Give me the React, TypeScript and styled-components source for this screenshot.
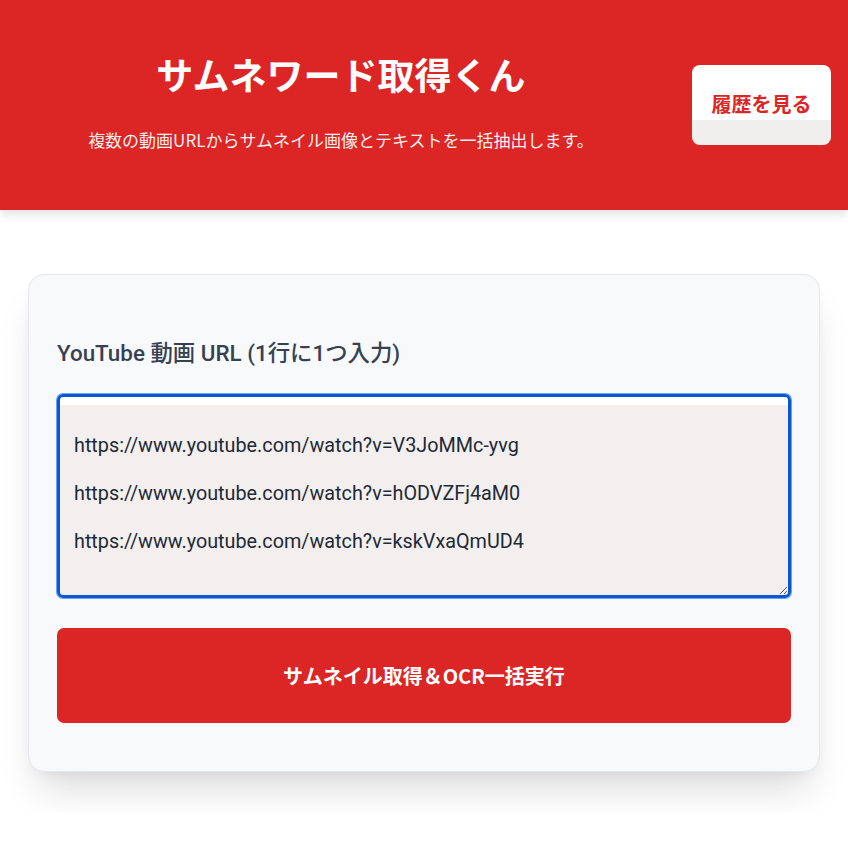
import React, { useEffect, useRef } from 'react';
import styled, { createGlobalStyle } from 'styled-components';

const urls = [
  'https://www.youtube.com/watch?v=V3JoMMc-yvg',
  'https://www.youtube.com/watch?v=hODVZFj4aM0',
  'https://www.youtube.com/watch?v=kskVxaQmUD4',
].join('\n');

const GlobalStyle = createGlobalStyle`
  body {
    margin: 0;
    background: #ffffff;
    font-family: Roboto, "Noto Sans CJK JP", sans-serif;
  }
`

const Header = styled.header`
  height: 210px;
  box-sizing: border-box;
  display: flex;
  align-items: center;
  gap: 16px;
  padding: 0 17px 0 0;
  background: #dc2626;
  box-shadow: 0 4px 10px rgba(0, 0, 0, 0.12);
`

const TitleBlock = styled.div`
  flex: 1;
  text-align: center;
  padding: 0 0 12px 6px;
`

const Title = styled.h1`
  margin: 0;
  font-family: "Noto Sans CJK JP", sans-serif;
  font-size: 37px;
  font-weight: 700;
  line-height: 56px;
  color: #ffffff;
`

const Subtitle = styled.p`
  margin: 25px 0 0;
  font-family: "Noto Sans CJK JP", sans-serif;
  font-size: 17px;
  line-height: 26px;
  color: rgba(255, 255, 255, 0.94);
`

const HistoryButton = styled.button`
  width: 139px;
  height: 80px;
  padding: 0 0 4px;
  border: none;
  border-radius: 8px;
  background: linear-gradient(#ffffff 0 69%, #f1eeee 69% 100%);
  color: #dc2626;
  font-family: "Noto Sans CJK JP", sans-serif;
  font-size: 20px;
  font-weight: 700;
  cursor: pointer;
`

const Main = styled.main`
  padding: 64px 28px 40px;
`

const Card = styled.section`
  display: flex;
  flex-direction: column;
  padding: 62px 28px 48px;
  background: #f8f9fa;
  border: 1px solid #e5e7eb;
  border-radius: 16px;
  box-shadow: 0 26px 40px -10px rgba(0, 0, 0, 0.14), 0 8px 16px -8px rgba(0, 0, 0, 0.08);
`

const Label = styled.label`
  margin-bottom: 25px;
  font-family: Roboto, "Noto Sans CJK JP", sans-serif;
  font-size: 22.4px;
  font-weight: 500;
  line-height: 32px;
  color: #374151;
`

const UrlInput = styled.textarea`
  box-sizing: border-box;
  width: 100%;
  height: 204px;
  padding: 25px 14px;
  border: 3px solid #0a58d0;
  border-radius: 6px;
  outline: none;
  box-shadow: 0 0 0 1px #6aa1f5;
  background: linear-gradient(#ffffff 0 8px, #f2efee 8px 100%);
  font-family: Roboto, sans-serif;
  font-size: 19.8px;
  line-height: 48px;
  color: #1f2937;
  caret-color: #111827;
  resize: vertical;
`

const RunButton = styled.button`
  margin-top: 30px;
  height: 95px;
  border: none;
  border-radius: 7px;
  background: #dc2626;
  color: #ffffff;
  font-family: "Noto Sans CJK JP", sans-serif;
  font-size: 20px;
  font-weight: 700;
  cursor: pointer;
`

const App = () => {
  const inputRef = useRef<HTMLTextAreaElement>(null);

  useEffect(() => {
    const el = inputRef.current;
    if (el) {
      el.focus();
      el.setSelectionRange(el.value.length, el.value.length);
    }
  }, []);

  return (
    <>
      <GlobalStyle />
      <Header>
        <TitleBlock>
          <Title>サムネワード取得くん</Title>
          <Subtitle>複数の動画URLからサムネイル画像とテキストを一括抽出します。</Subtitle>
        </TitleBlock>
        <HistoryButton>履歴を見る</HistoryButton>
      </Header>
      <Main>
        <Card>
          <Label htmlFor="urls">YouTube 動画 URL (1行に1つ入力)</Label>
          <UrlInput id="urls" ref={inputRef} defaultValue={urls} spellCheck={false} />
          <RunButton>サムネイル取得＆OCR一括実行</RunButton>
        </Card>
      </Main>
    </>
  );
};

export default App;
